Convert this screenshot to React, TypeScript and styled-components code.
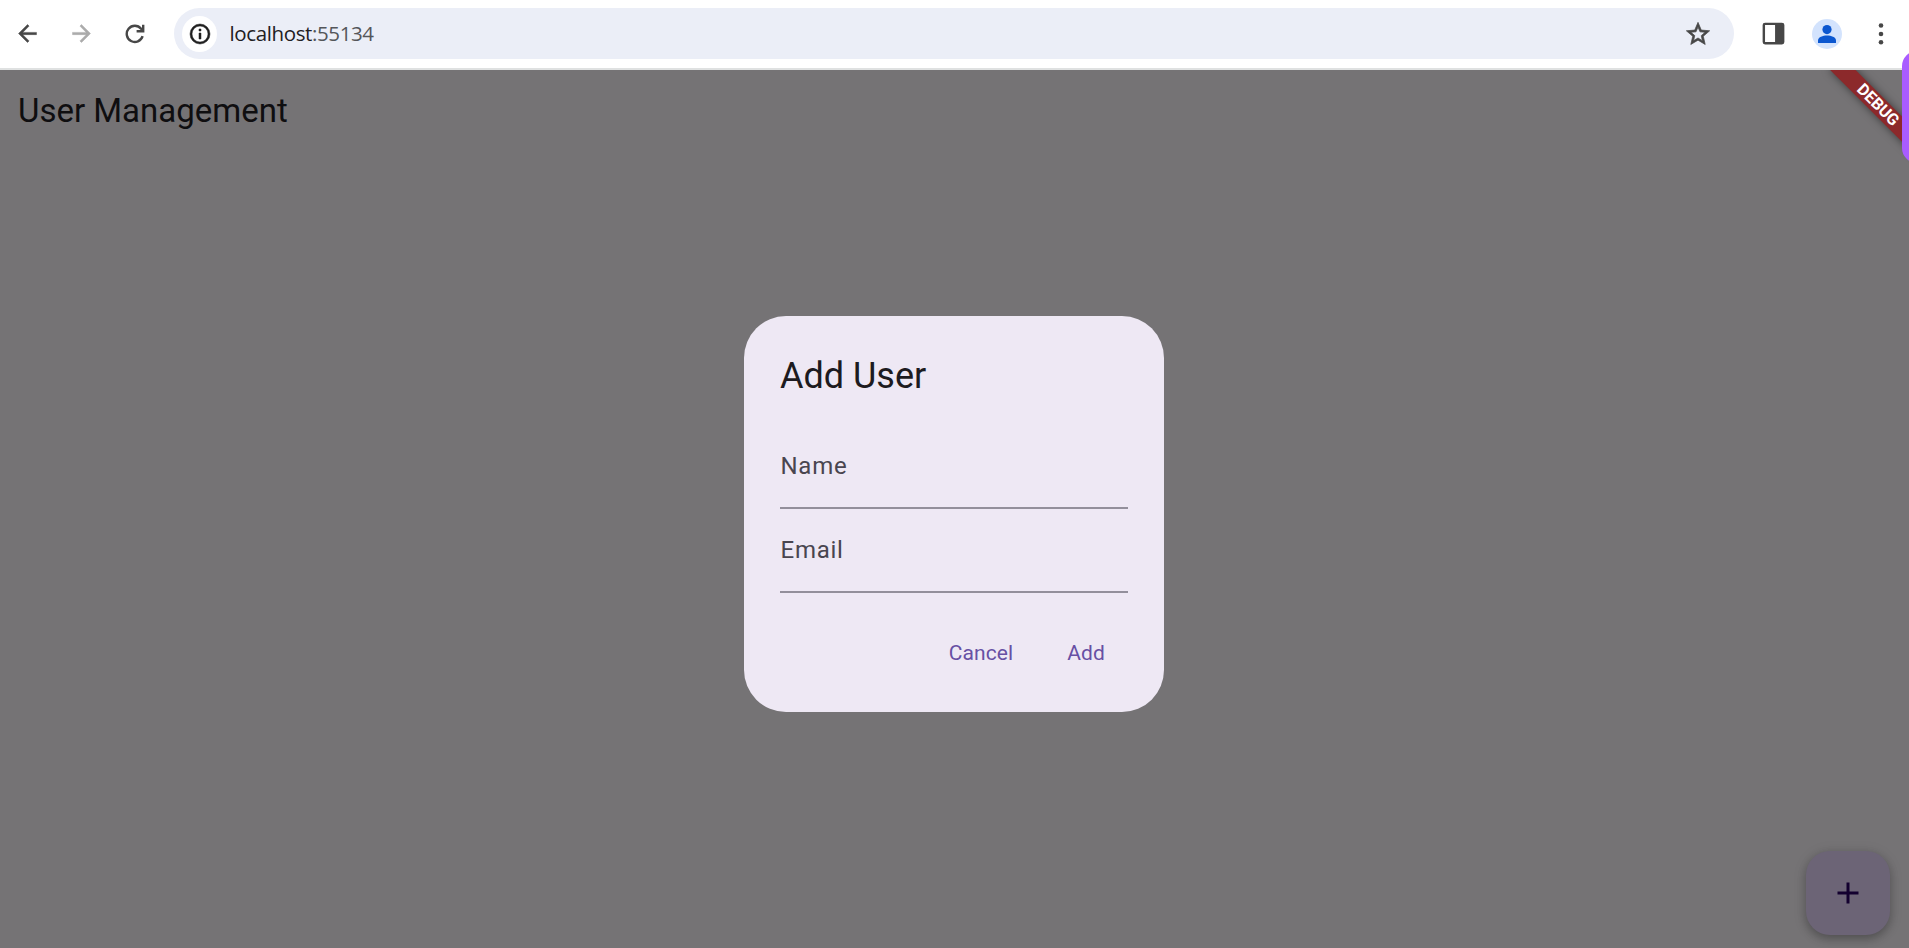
import React from 'react';
import styled, { createGlobalStyle } from 'styled-components';

const GlobalStyle = createGlobalStyle`
  * { box-sizing: border-box; }
  body { margin: 0; overflow: hidden; background: #757375; font-family: Roboto, sans-serif; }
`;

const Window = styled.div`
  position: relative;
  display: flex;
  flex-direction: column;
  height: 948px;
  overflow: hidden;
`;

const Toolbar = styled.header`
  display: flex;
  align-items: center;
  height: 70px;
  flex: none;
  padding: 0 13px 1px 12px;
  background: #fff;
  border-bottom: 2px solid #dfe1e1;
`;

const NavButtons = styled.nav`
  display: flex;
  gap: 24px;
  width: 162px;
`;

const IconButton = styled.button<{ $color?: string }>`
  display: flex;
  align-items: center;
  justify-content: center;
  width: 30px;
  height: 30px;
  padding: 0;
  border: 0;
  background: none;
  color: ${(p) => p.$color ?? '#474747'};
`;

const AddressBar = styled.div`
  display: flex;
  align-items: center;
  flex: 1;
  height: 51px;
  padding: 0 21px 0 8px;
  border-radius: 26px;
  background: #ebeef7;
`;

const SiteInfo = styled.span`
  display: flex;
  align-items: center;
  justify-content: center;
  width: 35px;
  height: 36px;
  border-radius: 50%;
  background: #fff;
  color: #1f1f1f;
`;

const Url = styled.span`
  flex: 1;
  margin-left: 12.5px;
  padding-bottom: 2px;
  font: 400 20.5px/28px 'Open Sans', sans-serif;
  letter-spacing: -0.38px;
  color: #1f2023;
`;

const Port = styled.span`
  color: #54565a;
`;

const Actions = styled.div`
  display: flex;
  align-items: center;
  gap: 24px;
  margin-left: 24px;
`;

const Avatar = styled.span`
  display: flex;
  align-items: center;
  justify-content: center;
  width: 30px;
  height: 30px;
  border-radius: 50%;
  background: #d3e3fd;
`;

const AppView = styled.main`
  position: relative;
  display: flex;
  flex-direction: column;
  flex: none;
  width: 1920px;
  height: 888px;
  margin-left: -6px;
  overflow: hidden;
  background: #757375;
`;

const AppBar = styled.h1`
  display: flex;
  align-items: center;
  height: 84px;
  margin: 0;
  padding: 0 24px 4px;
  font-size: 33px;
  font-weight: 400;
  color: #0f0e10;
`;

const DialogLayer = styled.div`
  position: absolute;
  inset: 0;
  display: flex;
  align-items: center;
  justify-content: center;
`;

const Dialog = styled.section`
  width: 420px;
  height: 396px;
  padding: 36px;
  border-radius: 42px;
  background: #eee8f4;
`;

const DialogTitle = styled.h2`
  margin: 0 0 25px;
  font-size: 36px;
  line-height: 48px;
  font-weight: 400;
  color: #1d1b20;
`;

const Field = styled.label`
  display: flex;
  align-items: center;
  height: 84px;
  border-bottom: 2px solid #938f9b;
  font-size: 24px;
  letter-spacing: 0.75px;
  text-indent: 0.5px;
  color: #49454f;
`;

const DialogActions = styled.div`
  display: flex;
  justify-content: flex-end;
  gap: 12px;
  margin-top: 36px;
  padding-right: 2px;
`;

const TextButton = styled.button`
  height: 48px;
  padding: 0 21px;
  border: 0;
  background: none;
  font: 400 21px Roboto, sans-serif;
  letter-spacing: 0.1px;
  color: #6750a4;
`;

const Fab = styled.button`
  display: flex;
  align-items: center;
  justify-content: center;
  width: 84px;
  height: 84px;
  margin: auto 24px 23px auto;
  padding: 0;
  border: 0;
  border-radius: 24px;
  background: #6c6476;
  color: #13002f;
  box-shadow: 0 4px 8px rgba(0, 0, 0, 0.22), 0 2px 14px rgba(0, 0, 0, 0.13);
`;

const DebugBanner = styled.div`
  position: absolute;
  top: 42px;
  right: -61px;
  width: 120px;
  height: 18px;
  transform: rotate(45deg);
  transform-origin: 60px -42px;
  background: #8c292b;
  box-shadow: 0 0 9px rgba(0, 0, 0, 0.5);
  color: #fff;
  font-size: 16.2px;
  line-height: 18px;
  font-weight: 700;
  text-align: center;
  text-indent: -3px;
`;

const SideHandle = styled.div`
  position: absolute;
  top: 51px;
  right: -23px;
  width: 30px;
  height: 112px;
  border-radius: 15px;
  background: #a95cff;
`;

const Glyph = ({ d, size = 24, weight = 0 }: { d: string; size?: number; weight?: number }) => (
  <svg width={size} height={size} viewBox="0 0 24 24" fill="currentColor" stroke="currentColor" strokeWidth={weight}>
    <path d={d} />
  </svg>
);

const PANEL = 'M19 3H5a2 2 0 0 0-2 2v14a2 2 0 0 0 2 2h14a2 2 0 0 0 2-2V5a2 2 0 0 0-2-2zM5 5h8.3v14H5z';

export default function App() {
  return (
    <Window>
      <GlobalStyle />
      <Toolbar>
        <NavButtons>
          <IconButton aria-label="Back">
            <Glyph size={27} weight={0.4} d="M20 11H7.83l5.59-5.59L12 4l-8 8 8 8 1.41-1.41L7.83 13H20v-2z" />
          </IconButton>
          <IconButton aria-label="Forward" $color="#ababab">
            <Glyph size={27} weight={0.4} d="M12 4l-1.41 1.41L16.17 11H4v2h12.17l-5.58 5.59L12 20l8-8z" />
          </IconButton>
          <IconButton aria-label="Reload">
            <svg width="20" height="20" viewBox="0 0 20 20" fill="none" stroke="currentColor" strokeWidth="2.4">
              <path d="M17.6 12.2A8.1 8.1 0 1 1 16.1 4.7L17.6 6.6" />
              <path d="M18.2 0.8V7.2H11.6" />
            </svg>
          </IconButton>
        </NavButtons>
        <AddressBar>
          <SiteInfo>
            <Glyph size={24} weight={0.5} d="M11 17h2v-6h-2v6zm1-15a10 10 0 1 0 0 20 10 10 0 0 0 0-20zm0 18a8 8 0 1 1 0-16 8 8 0 0 1 0 16zM11 9h2V7h-2v2z" />
          </SiteInfo>
          <Url>localhost<Port>:55134</Port></Url>
          <IconButton aria-label="Bookmark">
            <Glyph size={28} weight={0.6} d="M22 9.24l-7.19-.62L12 2 9.19 8.63 2 9.24l5.46 4.73L5.82 21 12 17.27 18.18 21l-1.63-7.03L22 9.24zM12 15.4l-3.76 2.27 1-4.28-3.32-2.88 4.38-.38L12 6.1l1.71 4.04 4.38.38-3.32 2.88 1 4.28L12 15.4z" />
          </IconButton>
        </AddressBar>
        <Actions>
          <IconButton aria-label="Side panel"><Glyph size={29} d={PANEL} /></IconButton>
          <Avatar>
            <svg width="18" height="18" viewBox="0 0 18 18" fill="#0b57d0">
              <circle cx="9" cy="4.6" r="4.6" />
              <path d="M0 18v-2.5C0 12 5 10.6 9 10.6s9 1.4 9 4.9V18z" />
            </svg>
          </Avatar>
          <IconButton aria-label="Menu">
            <svg width="6" height="22" viewBox="0 0 6 22" fill="currentColor">
              <circle cx="3" cy="2.5" r="2.3" />
              <circle cx="3" cy="11" r="2.3" />
              <circle cx="3" cy="19.3" r="2.3" />
            </svg>
          </IconButton>
        </Actions>
      </Toolbar>
      <AppView>
        <AppBar>User Management</AppBar>
        <Fab aria-label="Add user">
          <Glyph size={36} d="M19 13h-6v6h-2v-6H5v-2h6V5h2v6h6v2z" />
        </Fab>
        <DialogLayer>
          <Dialog>
            <DialogTitle>Add User</DialogTitle>
            <Field>Name</Field>
            <Field>Email</Field>
            <DialogActions>
              <TextButton>Cancel</TextButton>
              <TextButton>Add</TextButton>
            </DialogActions>
          </Dialog>
        </DialogLayer>
        <DebugBanner>DEBUG</DebugBanner>
      </AppView>
      <SideHandle />
    </Window>
  );
}
